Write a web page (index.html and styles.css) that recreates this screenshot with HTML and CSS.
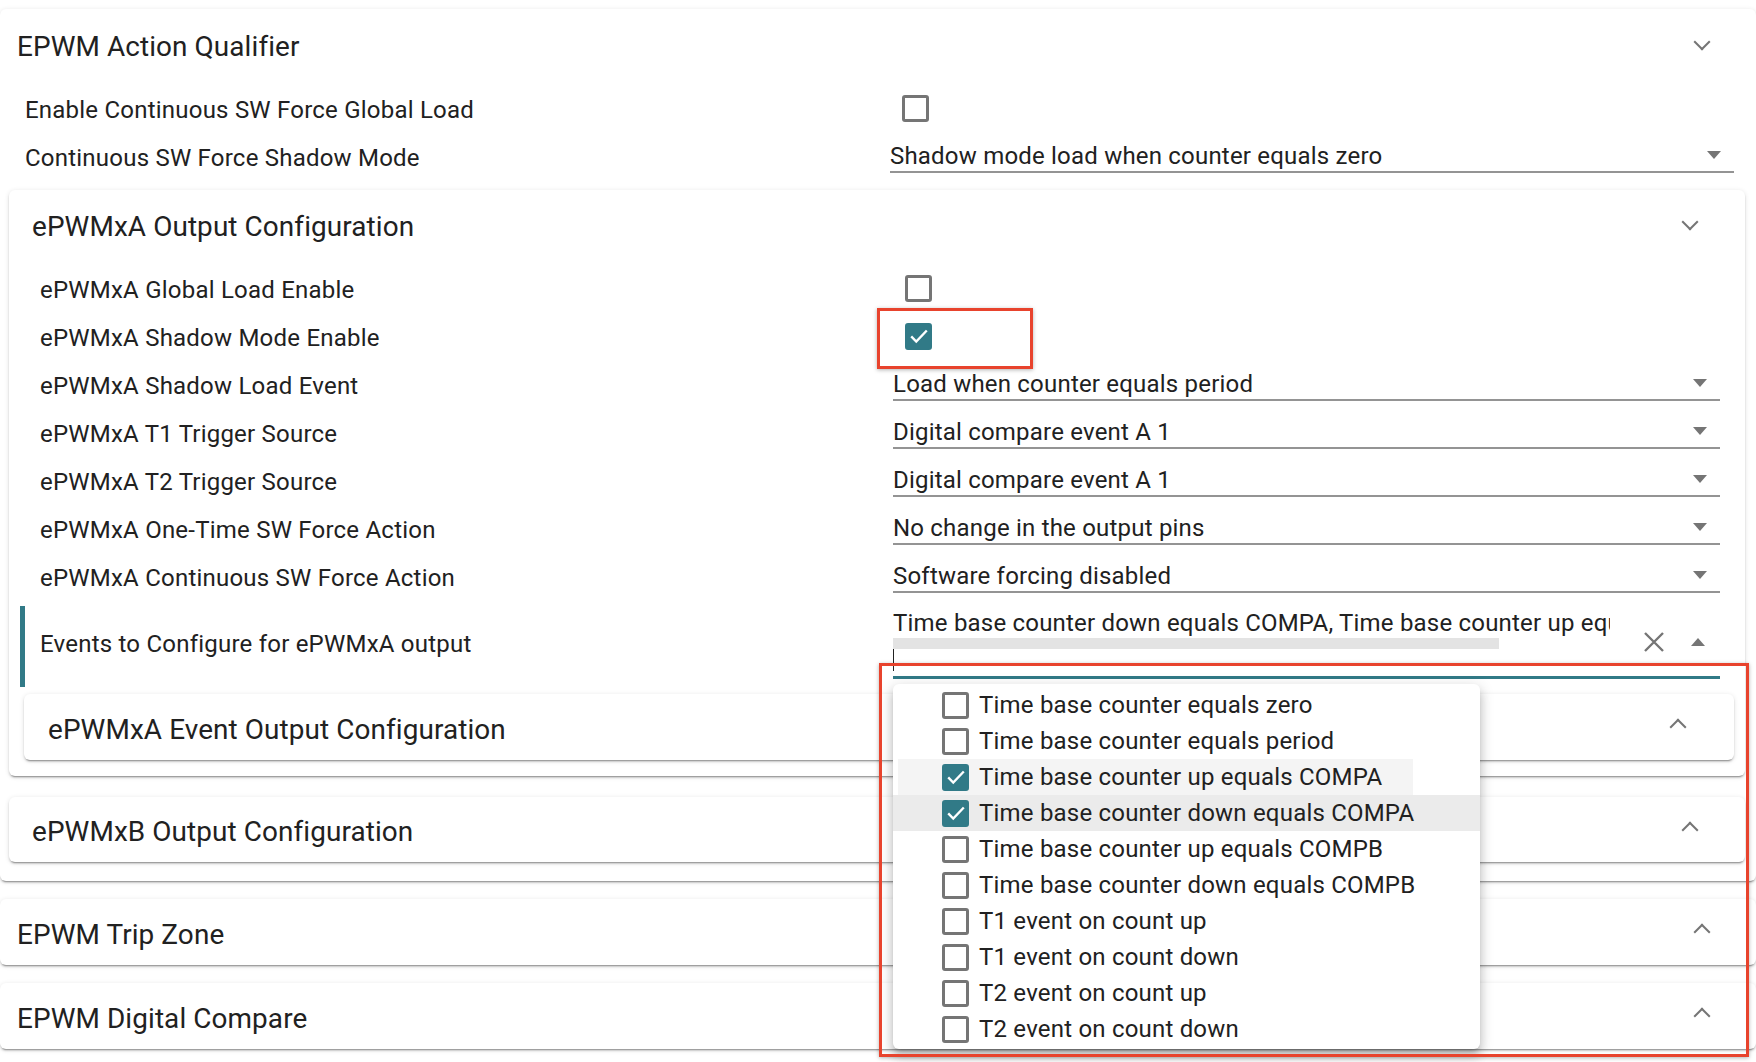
FILE: index.html
```html
<!DOCTYPE html>
<html>
<head>
<meta charset="utf-8">
<link rel="stylesheet" href="styles.css">
</head>
<body>
<div class="page">
  <section class="panel panel-main">
    <header class="panel-head">
      <span class="title">EPWM Action Qualifier</span>
      <span class="chev chev-down"></span>
    </header>
    <div class="panel-body">
      <div class="row row-outer">
        <span class="label">Enable Continuous SW Force Global Load</span>
        <div class="value"><span class="cb"></span></div>
      </div>
      <div class="row row-outer">
        <span class="label">Continuous SW Force Shadow Mode</span>
        <div class="value">
          <div class="select">
            <div class="select-text"><span>Shadow mode load when counter equals zero</span><span class="arrow"></span></div>
            <div class="select-line"></div>
          </div>
        </div>
      </div>

      <section class="card card-a">
        <header class="card-head">
          <span class="title">ePWMxA Output Configuration</span>
          <span class="chev chev-down"></span>
        </header>
        <div class="row row-inner">
          <span class="label">ePWMxA Global Load Enable</span>
          <div class="value"><span class="cb"></span></div>
        </div>
        <div class="row row-inner">
          <span class="label">ePWMxA Shadow Mode Enable</span>
          <div class="value"><span class="cb cb-on"><svg viewBox="0 0 24 24"><path d="M3.5 12.5l5.5 5.5L20.5 6"/></svg></span></div>
        </div>
        <div class="row row-inner">
          <span class="label">ePWMxA Shadow Load Event</span>
          <div class="value"><div class="select"><div class="select-text"><span>Load when counter equals period</span><span class="arrow"></span></div><div class="select-line"></div></div></div>
        </div>
        <div class="row row-inner">
          <span class="label">ePWMxA T1 Trigger Source</span>
          <div class="value"><div class="select"><div class="select-text"><span>Digital compare event A 1</span><span class="arrow"></span></div><div class="select-line"></div></div></div>
        </div>
        <div class="row row-inner">
          <span class="label">ePWMxA T2 Trigger Source</span>
          <div class="value"><div class="select"><div class="select-text"><span>Digital compare event A 1</span><span class="arrow"></span></div><div class="select-line"></div></div></div>
        </div>
        <div class="row row-inner">
          <span class="label">ePWMxA One-Time SW Force Action</span>
          <div class="value"><div class="select"><div class="select-text"><span>No change in the output pins</span><span class="arrow"></span></div><div class="select-line"></div></div></div>
        </div>
        <div class="row row-inner">
          <span class="label">ePWMxA Continuous SW Force Action</span>
          <div class="value"><div class="select"><div class="select-text"><span>Software forcing disabled</span><span class="arrow"></span></div><div class="select-line"></div></div></div>
        </div>
        <div class="row row-events">
          <span class="label">Events to Configure for ePWMxA output</span>
          <div class="ms">
            <div class="ms-top">
              <div class="ms-main">
                <div class="ms-value">Time base counter down equals COMPA, Time base counter up equals COMPA</div>
                <div class="ms-bar"></div>
                <div class="ms-caret"></div>
              </div>
              <div class="ms-icons">
                <svg class="ms-x" viewBox="0 0 20 20"><path d="M1 1L19 19M19 1L1 19"/></svg>
                <span class="arrow arrow-up"></span>
              </div>
            </div>
            <div class="ms-line"></div>
          </div>
        </div>
        <section class="card card-nested">
          <span class="title">ePWMxA Event Output Configuration</span>
          <span class="chev chev-up"></span>
        </section>
      </section>

      <section class="card card-b">
        <span class="title">ePWMxB Output Configuration</span>
        <span class="chev chev-up"></span>
      </section>
    </div>
  </section>

  <section class="panel panel-closed">
    <span class="title">EPWM Trip Zone</span>
    <span class="chev chev-up"></span>
  </section>
  <section class="panel panel-closed">
    <span class="title">EPWM Digital Compare</span>
    <span class="chev chev-up"></span>
  </section>
</div>

<div class="dropdown">
  <div class="opt"><span class="cb"></span><span>Time base counter equals zero</span></div>
  <div class="opt"><span class="cb"></span><span>Time base counter equals period</span></div>
  <div class="opt opt-hover"><span class="cb cb-on"><svg viewBox="0 0 24 24"><path d="M3.5 12.5l5.5 5.5L20.5 6"/></svg></span><span>Time base counter up equals COMPA</span></div>
  <div class="opt opt-active"><span class="cb cb-on"><svg viewBox="0 0 24 24"><path d="M3.5 12.5l5.5 5.5L20.5 6"/></svg></span><span>Time base counter down equals COMPA</span></div>
  <div class="opt"><span class="cb"></span><span>Time base counter up equals COMPB</span></div>
  <div class="opt"><span class="cb"></span><span>Time base counter down equals COMPB</span></div>
  <div class="opt"><span class="cb"></span><span>T1 event on count up</span></div>
  <div class="opt"><span class="cb"></span><span>T1 event on count down</span></div>
  <div class="opt"><span class="cb"></span><span>T2 event on count up</span></div>
  <div class="opt"><span class="cb"></span><span>T2 event on count down</span></div>
</div>

<div class="mark mark-small"></div>
<div class="mark mark-big"></div>
</body>
</html>
```

FILE: styles.css
```css
* { box-sizing: border-box; }
html, body { margin: 0; padding: 0; background: #fff; }
body {
  width: 1756px;
  height: 1062px;
  overflow: hidden;
  position: relative;
  font-family: Roboto, "Noto Sans", sans-serif;
  color: #212121;
  font-size: 24px;
}

.page { display: flex; flex-direction: column; }

.panel {
  background: #fff;
  border-radius: 6px;
  box-shadow: 0 3px 1px -2px rgba(0,0,0,.25), 0 2px 2px 0 rgba(0,0,0,.14), 0 1px 5px 0 rgba(0,0,0,.12);
}
.panel-main { margin-top: 9px; height: 872px; display: flex; flex-direction: column; }

.title { font-size: 27.9px; line-height: 32px; letter-spacing: 0.1px; }

.panel-head {
  height: 74px;
  display: flex;
  align-items: center;
  justify-content: space-between;
  padding: 2px 0 0 17px;
}

.chev {
  width: 12px; height: 12px;
  border-right: 2.5px solid #757575;
  border-bottom: 2.5px solid #757575;
  display: inline-block;
}
.chev-down { transform: rotate(45deg); margin-top: -10px; }
.chev-up { transform: rotate(-135deg); margin-top: 0; }
.panel-head .chev { margin-right: 48px; }

.panel-body { padding: 3px 11px 0 9px; display: flex; flex-direction: column; }

.row { display: grid; align-items: center; height: 48px; }
.row-outer { grid-template-columns: 865px 1fr; padding: 0 11px 0 16px; }
.row-inner { grid-template-columns: 853px 1fr; padding: 0 25px 0 31px; }
.label { font-size: 24px; line-height: 28px; letter-spacing: 0.22px; white-space: nowrap; }
.value { display: flex; align-items: center; height: 48px; }

.cb {
  width: 27px; height: 27px;
  border: 3px solid #757575;
  border-radius: 3px;
  display: inline-flex;
  align-items: center;
  justify-content: center;
  flex: none;
}
.value .cb { margin-left: 12px; margin-top: -4px; }
.cb-on { background: #317a87; border-color: #317a87; }
.cb-on svg { width: 22px; height: 22px; fill: none; stroke: #fff; stroke-width: 2.6; flex: none; }

.select { width: 100%; align-self: flex-start; padding-top: 8px; }
.select-text {
  display: flex; justify-content: space-between; align-items: center;
  font-size: 24px; line-height: 28px; height: 28px; letter-spacing: 0.2px;
  white-space: nowrap;
}
.select-line { height: 2px; background: #949494; margin-top: 1px; }

.arrow {
  width: 0; height: 0;
  border-left: 7.5px solid transparent;
  border-right: 7.5px solid transparent;
  border-top: 8px solid #757575;
  margin-right: 13px;
  margin-top: -2px;
}
.arrow-up { border-top: 0; border-bottom: 8px solid #757575; margin: 0; }

.card {
  background: #fff;
  border-radius: 6px;
  box-shadow: 0 3px 1px -2px rgba(0,0,0,.25), 0 2px 2px 0 rgba(0,0,0,.14), 0 1px 5px 0 rgba(0,0,0,.12);
}
.card-a { margin-top: 8px; display: flex; flex-direction: column; padding-bottom: 16px; }
.card-head {
  height: 72px; display: flex; align-items: center; justify-content: space-between;
  padding: 2px 0 0 23px; margin-bottom: 4px;
}
.card-head .chev { margin-right: 49px; }

.row-events {
  grid-template-columns: 853px 1fr;
  height: 81px;
  margin: 4px 25px 0 11px;
  border-left: 5px solid #317a87;
  padding-left: 15px;
  align-items: center;
}
.row-events .label { margin-bottom: 5px; }
.ms { align-self: start; padding-top: 3px; }
.ms-top { display: flex; height: 63px; }
.ms-main { width: 717px; overflow: hidden; }
.ms-value { white-space: nowrap; font-size: 24px; line-height: 28px; height: 28px; letter-spacing: 0.2px; }
.ms-bar { width: 606px; height: 11px; background: #e3e3e3; margin-top: 1px; }
.ms-caret { width: 1px; height: 22px; background: #222; }
.ms-icons { display: flex; align-items: center; padding-left: 34px; height: 63px; gap: 27px; padding-top: 2px; }
.ms-x { width: 20px; height: 20px; fill: none; stroke: #757575; stroke-width: 2.4; }
.ms-line { height: 3px; background: #317a87; margin-top: 4px; }

.card-nested {
  margin: 7px 11px 0 15px;
  height: 66px;
  display: flex; align-items: center; justify-content: space-between;
  padding: 6px 0 0 24px;
}
.card-nested .chev { margin-right: 50px; margin-top: -6px; }

.card-b {
  margin-top: 21px;
  height: 65px;
  display: flex; align-items: center; justify-content: space-between;
  padding: 5px 0 0 23px;
}
.card-b .chev { margin-right: 49px; margin-top: -5px; }

.panel-closed {
  margin-top: 18px;
  height: 66px;
  display: flex; align-items: center; justify-content: space-between;
  padding: 6px 0 0 17px;
}
.panel-closed .chev { margin-right: 48px; margin-top: -6px; }

.dropdown {
  position: absolute;
  left: 893px; top: 684px;
  width: 587px; height: 365px;
  background: #fff;
  border-radius: 6px;
  padding-top: 3px;
  box-shadow: 0 5px 5px -3px rgba(0,0,0,.2), 0 8px 10px 1px rgba(0,0,0,.14), 0 3px 14px 2px rgba(0,0,0,.12);
}
.opt {
  height: 36px; display: flex; align-items: center;
  padding-left: 49px; gap: 10px;
  font-size: 24px; line-height: 28px; letter-spacing: 0.2px;
  white-space: nowrap;
  position: relative;
}
.opt > * { position: relative; }
.opt-hover::before {
  content: ""; position: absolute; left: 5px; top: 0; bottom: 0; width: 515px; background: #f4f4f4;
}
.opt-active { background: #ebebeb; }

.mark {
  position: absolute;
  border: 3px solid #e8432d;
  box-shadow: 0 1px 4px rgba(0,0,0,.3);
}
.mark-small { left: 877px; top: 308px; width: 156px; height: 61px; }
.mark-big { left: 879px; top: 663px; width: 870px; height: 394px; }
```
